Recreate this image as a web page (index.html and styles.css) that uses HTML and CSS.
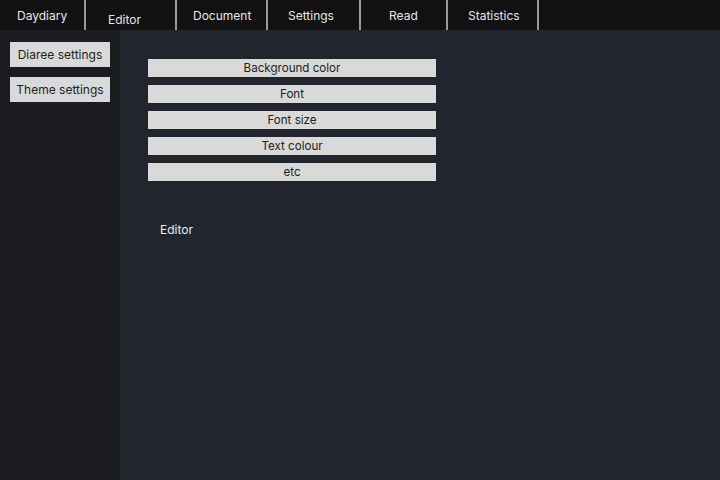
FILE: index.html
```html
<!DOCTYPE html>
<html>
<head>
<meta charset="utf-8">
<link rel="stylesheet" href="styles.css">
</head>
<body>
<div class="app">
  <nav class="tabs">
    <div class="tab tab-daydiary">Daydiary</div>
    <div class="tab tab-editor">Editor</div>
    <div class="tab tab-document">Document</div>
    <div class="tab tab-settings">Settings</div>
    <div class="tab tab-read">Read</div>
    <div class="tab tab-statistics">Statistics</div>
  </nav>
  <div class="body">
    <aside class="sidebar">
      <button class="side-btn">Diaree settings</button>
      <button class="side-btn">Theme settings</button>
    </aside>
    <main class="main">
      <div class="options">
        <button class="opt">Background color</button>
        <button class="opt">Font</button>
        <button class="opt">Font size</button>
        <button class="opt">Text colour</button>
        <button class="opt">etc</button>
      </div>
      <div class="editor-label">Editor</div>
    </main>
  </div>
</div>
</body>
</html>
```
FILE: styles.css
```css
html, body {
  margin: 0;
  padding: 0;
  width: 720px;
  height: 480px;
  overflow: hidden;
  background: #22252e;
  font-family: Inter, "Noto Sans", sans-serif;
  font-size: 12px;
}
.app {
  display: flex;
  flex-direction: column;
  height: 480px;
}
.tabs {
  display: grid;
  grid-template-columns: 86px 91px 91px 93px 87px 91px;
  height: 30px;
  background: #111111;
  flex: none;
}
.tab {
  color: #e6e6e6;
  border-right: 2px solid #9a9a9a;
  display: flex;
  align-items: center;
  white-space: nowrap;
  font-size: 12px;
}
.tab-daydiary { padding-left: 17px; }
.tab-editor { padding-left: 22px; padding-top: 8px; }
.tab-document { padding-left: 16px; }
.tab-settings { padding-left: 20px; }
.tab-read { padding-left: 28px; }
.tab-statistics { padding-left: 20px; }
.body {
  display: flex;
  flex: 1;
}
.sidebar {
  width: 120px;
  background: #1b1c20;
  display: flex;
  flex-direction: column;
  gap: 10px;
  padding: 12px 10px 0;
  box-sizing: border-box;
}
.side-btn {
  width: 100px;
  height: 25px;
  border: none;
  padding: 0;
  background: #d9d9d9;
  color: #222;
  font-family: inherit;
  font-size: 12px;
  text-align: center;
}
.main {
  flex: 1;
  padding: 29px 0 0 28px;
}
.options {
  width: 288px;
  display: flex;
  flex-direction: column;
  gap: 8px;
}
.opt {
  height: 18px;
  border: none;
  padding: 0;
  background: #d9d9d9;
  color: #222;
  font-family: inherit;
  font-size: 11.6px;
  line-height: 18px;
}
.editor-label {
  color: #eeeeee;
  font-size: 12px;
  margin: 41px 0 0 12px;
}
```
